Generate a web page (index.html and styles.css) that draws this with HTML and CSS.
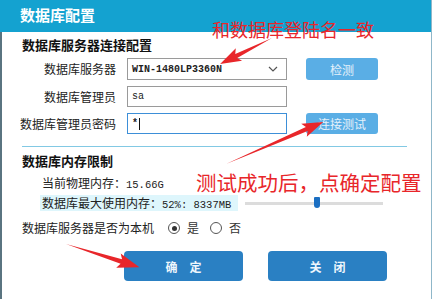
FILE: index.html
```html
<!DOCTYPE html>
<html lang="zh">
<head>
<meta charset="utf-8">
<link rel="stylesheet" href="styles.css">
</head>
<body>
<div class="window">
  <div class="titlebar">数据库配置</div>
  <div class="main">
    <div class="heading h1">数据库服务器连接配置</div>
    <div class="form">
      <label class="lbl">数据库服务器</label>
      <div class="field select"><span class="val">WIN-1480LP3360N</span>
        <svg class="chev" width="10" height="6" viewBox="0 0 10 6"><path d="M1 1 L5 5 L9 1" fill="none" stroke="#555" stroke-width="1.2"/></svg>
      </div>
      <div class="btn light">检测</div>
      <label class="lbl">数据库管理员</label>
      <div class="field"><span class="val thin">sa</span></div>
      <div></div>
      <label class="lbl">数据库管理员密码</label>
      <div class="field focus"><span class="val">*</span><span class="caret"></span></div>
      <div class="btn light">连接测试</div>
    </div>
    <div class="sep"></div>
    <div class="heading h2">数据库内存限制</div>
    <div class="mem">当前物理内存：<span class="num">15.66G</span></div>
    <div class="mem-row">
      <div class="mem hl">数据库最大使用内存：<span class="num">52%: 8337MB</span></div>
      <div class="slider"><div class="thumb"></div></div>
    </div>
    <div class="radio-row">
      <span class="rlbl">数据库服务器是否为本机</span>
      <span class="radio on"></span><span class="ropt">是</span>
      <span class="radio"></span><span class="ropt">否</span>
    </div>
    <div class="buttons">
      <div class="btn dark">确　定</div>
      <div class="btn dark">关　闭</div>
    </div>
  </div>
</div>
<div class="note n1">和数据库登陆名一致</div>
<div class="note n2">测试成功后，点确定配置</div>
<svg class="arrows" width="433" height="299" viewBox="0 0 433 299">
  <g transform="translate(272 38) rotate(153.4)">
    <polygon points="0,0 40,-2.2 37,-7 58,0 37,7 40,2.2" fill="#e8262a"/>
  </g>
  <g transform="translate(226 164) rotate(-23.4)">
    <polygon points="0,0 88,-2.2 85,-7 106,0 85,7 88,2.2" fill="#e8262a"/>
  </g>
  <g transform="translate(66 244) rotate(17.5)">
    <polygon points="0,0 58,-2.4 55,-7.5 77,0 55,7.5 58,2.4" fill="#e8262a"/>
  </g>
</svg>
</body>
</html>
```
FILE: styles.css
```css
html, body {
  margin: 0;
  padding: 0;
  background: #ffffff;
}
body {
  width: 433px;
  height: 299px;
  overflow: hidden;
  position: relative;
  font-family: "Noto Sans CJK SC", "Microsoft YaHei", sans-serif;
  color: #222;
}
.window {
  width: 431px;
  height: 299px;
  border-right: 1px solid #8fb7c9;
  box-sizing: content-box;
}
.titlebar {
  height: 32px;
  background: #14a2d0;
  color: #fff;
  font-weight: 700;
  font-size: 15px;
  line-height: 30px;
  padding-left: 20px;
  box-sizing: border-box;
}
.main {
  border-left: 2px solid #5a7480;
  height: 267px;
  box-sizing: border-box;
  padding-left: 20px;
}
.heading {
  font-weight: 700;
  font-size: 13px;
  line-height: 16px;
  height: 16px;
  color: #111;
}
.h1 { padding-top: 5px; }
.form {
  display: grid;
  grid-template-columns: 96px 160px 80px;
  grid-template-rows: 22px 21px 21px;
  column-gap: 11px;
  row-gap: 6px;
  margin-top: 5px;
  margin-left: -2px;
  align-items: center;
}
.form .btn { margin-left: 8px; }
.lbl {
  text-align: right;
  font-size: 12px;
  line-height: 16px;
  white-space: nowrap;
  color: #222;
}
.field {
  height: 100%;
  border: 1px solid #9a9a9a;
  box-sizing: border-box;
  background: #fff;
  display: flex;
  align-items: center;
  padding-left: 4px;
  position: relative;
}
.field.focus { border-color: #3d8fd8; }
.val {
  font-family: "Liberation Mono", monospace;
  font-size: 10px;
  font-weight: 700;
  color: #222;
}
.val.thin { font-weight: 400; }
.caret {
  width: 1px;
  height: 12px;
  background: #111;
  margin-left: 1px;
}
.chev {
  margin-left: auto;
  margin-right: 8px;
}
.btn {
  display: flex;
  align-items: center;
  justify-content: center;
  height: 100%;
  border-radius: 3px;
  font-size: 12px;
  color: #fff;
}
.btn.light {
  background: #5aaee5;
  color: #e4f1fb;
}
.sep {
  margin-top: 12px;
  margin-left: 0;
  width: 385px;
  height: 1px;
  background: #82c9e4;
}
.h2 { margin-top: 6px; }
.mem {
  font-size: 12px;
  line-height: 16px;
  height: 16px;
  color: #222;
  white-space: nowrap;
}
.mem .num {
  font-family: "Liberation Mono", monospace;
  font-size: 10.5px;
}
.main > .mem {
  margin-top: 6px;
  margin-left: 20px;
}
.mem-row {
  display: flex;
  align-items: center;
  margin-top: 4px;
  margin-left: 18px;
}
.mem.hl {
  background: #def6fc;
  padding-left: 2px;
  width: 198px;
  box-sizing: border-box;
}
.slider {
  margin-left: 7px;
  width: 138px;
  height: 3px;
  background: #dcdcdc;
  position: relative;
}
.thumb {
  position: absolute;
  left: 69px;
  top: -5px;
  width: 6px;
  height: 11px;
  background: #1b6fc2;
  border-radius: 1px 1px 3px 3px;
}
.radio-row {
  display: flex;
  align-items: center;
  margin-top: 9px;
  font-size: 12px;
  line-height: 16px;
  color: #222;
}
.rlbl { width: 146px; }
.radio {
  width: 10px;
  height: 10px;
  border: 1px solid #555;
  border-radius: 50%;
  position: relative;
  box-sizing: content-box;
}
.radio.on::after {
  content: "";
  position: absolute;
  left: 2.5px;
  top: 2.5px;
  width: 5px;
  height: 5px;
  border-radius: 50%;
  background: #333;
}
.ropt { margin-left: 7px; width: 23px; color: #333; }
.buttons {
  display: flex;
  gap: 25px;
  margin-top: 15px;
  margin-left: 102px;
  height: 30px;
}
.btn.dark {
  width: 119px;
  background: #2a80c3;
  font-weight: 700;
  border-radius: 4px;
  color: #eef6fc;
}
.note {
  position: absolute;
  color: #e8262a;
  white-space: nowrap;
  font-family: "Noto Sans CJK SC", sans-serif;
}
.n1 {
  left: 212px;
  top: 16px;
  font-size: 18px;
  line-height: 26px;
}
.n2 {
  left: 196px;
  top: 168px;
  font-size: 20.5px;
  line-height: 28px;
}
.arrows {
  position: absolute;
  left: 0;
  top: 0;
  pointer-events: none;
}
```
